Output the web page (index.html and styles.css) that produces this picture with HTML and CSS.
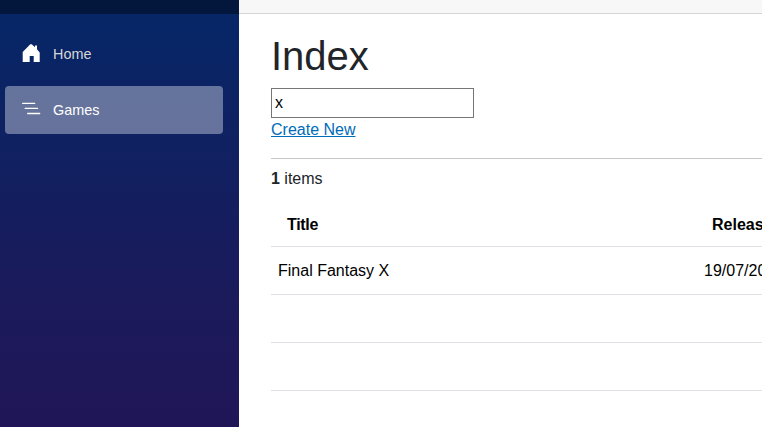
FILE: index.html
```html
<!DOCTYPE html>
<html lang="en">
<head>
<meta charset="utf-8">
<title>Index</title>
<link rel="stylesheet" href="styles.css">
</head>
<body>
<div class="page">
  <aside class="sidebar">
    <div class="brand"></div>
    <nav class="nav">
      <a class="nav-link"><svg class="icon" width="20" height="20" viewBox="0 0 20 20"><path fill="#fff" d="M9.300 .2h1.400l3.300 3V1.500h2v3.700l2.700 3.300V18h-6v-6h-4v6h-7V8z"/></svg>Home</a>
      <a class="nav-link active"><svg class="icon" width="20" height="20" viewBox="0 0 20 20"><path stroke="#fff" stroke-width="1.300" fill="none" stroke-linecap="round" d="M1.700 3.400h12M4.200 8.400h12.300M6.700 13.500h12"/></svg>Games</a>
    </nav>
  </aside>
  <main class="main">
    <div class="top-row"></div>
    <article class="content">
      <h1>Index</h1>
      <input class="search" type="text" value="x">
      <p class="create"><a href="#">Create New</a></p>
      <div class="count"><strong>1</strong> items</div>
      <table class="grid">
        <thead><tr><th>Title</th><th>Release Date</th></tr></thead>
        <tbody>
          <tr><td>Final Fantasy X</td><td>19/07/2001</td></tr>
          <tr><td></td><td></td></tr>
          <tr><td></td><td></td></tr>
          <tr><td></td><td></td></tr>
        </tbody>
      </table>
    </article>
  </main>
</div>
</body>
</html>
```
FILE: styles.css
```css
* { box-sizing: border-box; }
body { margin: 0; overflow: hidden; font: 16px/24px "Liberation Sans", Arial, sans-serif; color: #212529; background: #fff; }
.page { display: flex; height: 427px; overflow: hidden; }
.sidebar { flex: 0 0 239px; background: linear-gradient(180deg, #052767 0%, #1b1a5b 70%, #201657 100%); }
.brand { height: 14px; background: rgba(0, 0, 0, 0.4); }
.nav { padding: 16px 16px 0 5px; display: flex; flex-direction: column; gap: 8px; }
.nav-link { display: flex; align-items: center; height: 48px; padding-left: 16px; border-radius: 4px; color: #d7d7d7; font-size: 14.4px; }
.nav-link.active { background: rgba(255, 255, 255, 0.37); color: #fff; }
.icon { margin-right: 12px; }
.main { flex: 1; min-width: 0; overflow: hidden; }
.top-row { height: 14px; background: #f7f7f7; border-bottom: 1px solid #d6d5d5; }
.content { padding: 18px 0 0 32px; }
h1 { margin: 0 0 8px; font-size: 40px; font-weight: 400; line-height: 48px; }
.search { display: block; width: 203px; height: 30px; padding: 1px 3px; border: 1px solid #767676; border-radius: 0; font: inherit; color: #000; background: #fff; }
.create { margin: 0 0 16px; }
.create a { color: #006bb7; text-decoration: underline; }
.count { border-top: 1px solid #c6c6c6; padding-top: 8px; height: 43px; }
.grid { width: 800px; table-layout: fixed; border-collapse: separate; border-spacing: 0; color: #000; }
.grid th, .grid td { height: 48px; padding: 0 7px; text-align: left; border-bottom: 1px solid #dee2e6; white-space: nowrap; }
.grid td + td { padding-left: 8px; }
.grid th { height: 46px; padding: 2px 0 0 16px; }
.grid th:first-child { width: 425px; letter-spacing: -0.3px; }
```
